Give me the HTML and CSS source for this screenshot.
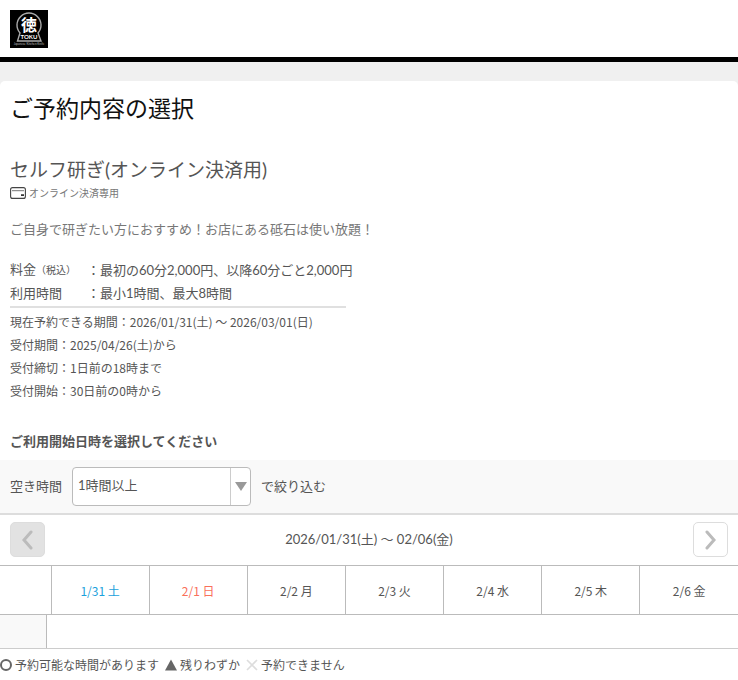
FILE: index.html
```html
<!DOCTYPE html>
<html lang="ja">
<head>
<meta charset="UTF-8">
<meta name="viewport" content="width=device-width, initial-scale=1">
<title>ご予約内容の選択</title>
<link rel="stylesheet" href="styles.css">
</head>
<body>
<header class="header">
	<a href="#" class="logo" aria-label="TOKU">
		<svg width="38" height="38" viewBox="0 0 38 38">
			<rect width="38" height="38" fill="#000"/>
			<path d="M10 23 A12 12 0 1 1 28 23 L31 31 H7.5 Z" fill="none" stroke="#aaa" stroke-width="1.4"/>
			<text x="19" y="20.5" class="logo-kanji">徳</text>
			<text x="19" y="28.5" class="logo-name">TOKU</text>
			<text x="19" y="35" class="logo-sub">Japanese Kitchen Knife</text>
		</svg>
	</a>
</header>

<main class="panel">
	<h1 class="title">ご予約内容の選択</h1>

	<section class="plan">
		<h2 class="plan-name">セルフ研ぎ(オンライン決済用)</h2>
		<p class="payment">
			<svg width="16" height="12" viewBox="0 0 16 12">
				<rect x="0.6" y="0.6" width="14.8" height="10.8" rx="2" fill="none" stroke="#444" stroke-width="1.1"/>
				<path d="M2 3.7h12" stroke="#777" stroke-width="1"/>
				<rect x="11" y="7.3" width="3" height="1.6" fill="#222"/>
			</svg>
			<span>オンライン決済専用</span>
		</p>
		<p class="desc">ご自身で研ぎたい方におすすめ！お店にある砥石は使い放題！</p>

		<table class="price">
			<tr>
				<th>料金<small>（税込）</small></th>
				<td>：最初の60分2,000円、以降60分ごと2,000円</td>
			</tr>
			<tr>
				<th>利用時間</th>
				<td>：最小1時間、最大8時間</td>
			</tr>
		</table>
		<hr class="line">
		<ul class="terms">
			<li>現在予約できる期間：2026/01/31(土) ～ 2026/03/01(日)</li>
			<li>受付期間：2025/04/26(土)から</li>
			<li>受付締切：1日前の18時まで</li>
			<li>受付開始：30日前の0時から</li>
		</ul>
	</section>

	<h3 class="guide">ご利用開始日時を選択してください</h3>

	<form class="filter">
		<label for="selTime">空き時間</label>
		<span class="select-box">
			<select id="selTime">
				<option>1時間以上</option>
				<option>2時間以上</option>
				<option>3時間以上</option>
			</select>
			<span class="arrow"><svg width="12" height="9" viewBox="0 0 12 9"><path d="M0 0h12L6 9z" fill="#999"/></svg></span>
		</span>
		<span>で絞り込む</span>
	</form>

	<!-- 週の移動 -->
	<div class="week">
		<button type="button" class="week-btn" aria-label="前の週" disabled>
			<svg width="12" height="20" viewBox="0 0 12 20"><path d="M9 2L2 10l7 8" fill="none" stroke="#bbb" stroke-width="3" stroke-linecap="round"/></svg>
		</button>
		<span class="week-range">2026/01/31(土) ～ 02/06(金)</span>
		<button type="button" class="week-btn" aria-label="次の週">
			<svg width="12" height="20" viewBox="0 0 12 20"><path d="M2 2l7 8-7 8" fill="none" stroke="#bbb" stroke-width="3" stroke-linecap="round"/></svg>
		</button>
	</div>

	<table class="days">
		<tr>
			<td class="corner"></td>
			<th class="sat">1/31 土</th>
			<th class="sun">2/1 日</th>
			<th>2/2 月</th>
			<th>2/3 火</th>
			<th>2/4 水</th>
			<th>2/5 木</th>
			<th>2/6 金</th>
		</tr>
	</table>
	<table class="times">
		<tr>
			<td class="time"></td>
			<td></td>
		</tr>
	</table>

	<ul class="legend">
		<li><svg width="12" height="12" viewBox="0 0 12 12"><circle cx="6" cy="6" r="5" fill="none" stroke="#666" stroke-width="2"/></svg>予約可能な時間があります</li>
		<li><svg width="12" height="12" viewBox="0 0 12 12"><path d="M6 0.5L12 11.5H0z" fill="#666"/></svg>残りわずか</li>
		<li><svg width="12" height="12" viewBox="0 0 12 12"><path d="M1 1l10 10M11 1L1 11" stroke="#ddd" stroke-width="1.6"/></svg>予約できません</li>
	</ul>
</main>
</body>
</html>
```
FILE: styles.css
```css
* {
	box-sizing: border-box;
}
body {
	display: flex;
	flex-direction: column;
	min-height: 100vh;
	margin: 0;
	background: #f0f0f0;
	color: #555;
	font-family: Lato, "Noto Sans CJK JP", sans-serif;
	font-size: 13px;
	line-height: 23px;
}
h1, h2, h3, p, ul {
	margin: 0;
	padding: 0;
}
ul {
	list-style: none;
}
svg {
	display: block;
	flex: none;
}
table {
	border-collapse: collapse;
}
th {
	font-weight: normal;
}

/* ヘッダー */
.header {
	padding: 10px 10px 9px;
	background: #fff;
	border-bottom: 5px solid #000;
}
.logo {
	display: block;
	width: 38px;
}
.logo text {
	fill: #fff;
	text-anchor: middle;
}
.logo-kanji {
	font-size: 16px;
	font-weight: bold;
}
.logo-name {
	font-size: 6px;
	font-weight: bold;
}
.logo .logo-sub {
	font-size: 3px;
	fill: #bbb;
}

.panel {
	flex: 1;
	margin-top: 19px;
	background: #fff;
	border-radius: 5px 5px 0 0;
}
.title {
	padding: 10px 10px 0;
	color: #111;
	font-size: 23px;
	font-weight: normal;
	line-height: 34px;
}

/* プラン内容 */
.plan {
	padding: 31px 10px 0;
}
.plan-name {
	font-size: 19px;
	font-weight: normal;
	line-height: 27px;
}
.payment {
	display: flex;
	align-items: center;
	gap: 3px;
	color: #777;
	font-size: 10px;
	line-height: 20px;
}
.desc {
	margin-top: 15px;
	color: #777;
}
.price {
	margin-top: 17px;
}
.price th,
.price td {
	padding: 0;
	text-align: left;
}
.price th {
	width: 77px;
}
.price small {
	font-size: 10px;
}
.line {
	width: 336px;
	max-width: 100%;
	height: 2px;
	margin: 1px 0 2px;
	border: 0;
	background: #e0e0e0;
}
.terms {
	font-family: "Noto Sans CJK JP", sans-serif;
	font-size: 12px;
}

.guide {
	padding: 28px 10px 7px;
	font-size: 13px;
	font-weight: bold;
}

/* 絞り込み */
.filter {
	display: flex;
	align-items: center;
	gap: 10px;
	padding: 7px 10px;
	background: #f9f9f9;
	border-bottom: 2px solid #ddd;
}
.select-box {
	display: flex;
	position: relative;
	width: 179px;
}
.select-box select {
	width: 100%;
	height: 39px;
	padding: 0 26px 2px 5px;
	appearance: none;
	background: #fff;
	border: 1px solid #bbb;
	border-radius: 4px;
	color: #555;
	font: inherit;
}
.arrow {
	display: flex;
	align-items: center;
	justify-content: center;
	position: absolute;
	top: 1px;
	right: 1px;
	bottom: 1px;
	width: 20px;
	border-left: 1px solid #ccc;
	pointer-events: none;
}

/* カレンダー */
.week {
	display: flex;
	align-items: center;
	justify-content: space-between;
	padding: 7px 10px 8px;
}
.week-btn {
	display: flex;
	align-items: center;
	justify-content: center;
	width: 35px;
	height: 35px;
	padding: 0;
	background: #fff;
	border: 1px solid #ddd;
	border-radius: 5px;
}
.week-btn:disabled {
	background: #e2e2e2;
}
.days,
.times {
	width: 100%;
	table-layout: fixed;
}
.days th,
.days td {
	height: 49px;
	padding: 0;
	border: 1px solid #bbb;
	border-width: 1px 0 1px 1px;
	font-family: "Noto Sans CJK JP", sans-serif;
	font-size: 12px;
}
.days .corner {
	width: 51px;
	border-left: 0;
}
.days .sat {
	color: #1ba1dc;
}
.days .sun {
	color: #f9705a;
}
.times td {
	height: 33px;
	padding: 0;
	border-bottom: 1px solid #ccc;
}
.times .time {
	width: 46px;
	background: #f9f9f9;
	border-right: 1px solid #bbb;
}

.legend {
	display: flex;
	flex-wrap: wrap;
	gap: 0 6px;
	padding: 5px 0 0;
	font-size: 12px;
}
.legend li {
	display: flex;
	align-items: center;
	gap: 3px;
}
```
